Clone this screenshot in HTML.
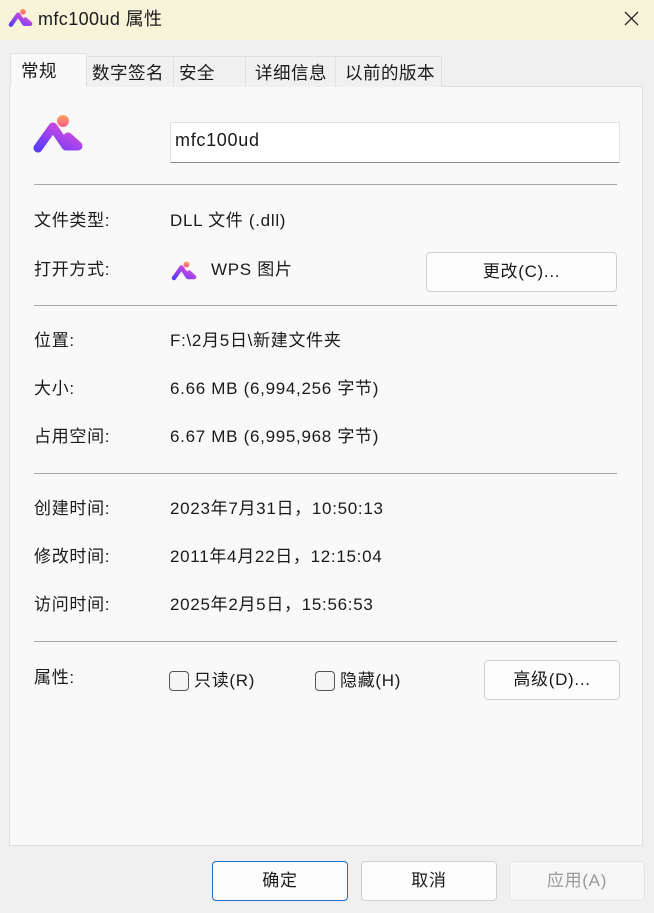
<!DOCTYPE html>
<html><head><meta charset="utf-8"><style>
*{margin:0;padding:0;box-sizing:border-box}
body{width:654px;height:913px;background:#f0f0f0;font-family:"Liberation Sans","Noto Sans CJK SC",sans-serif;font-size:17px;letter-spacing:0.7px;color:#1a1a1a;position:relative;overflow:hidden}
.a{position:absolute;white-space:nowrap;line-height:22px}
.title{left:0;top:0;width:654px;height:40px;background:#f8f4d9}
.panel{left:9px;top:86px;width:634px;height:760px;background:#f9f9f9;border:1px solid #dedede}
.tab{top:56px;height:31px;border:1px solid #e0e0e0;border-bottom:none;background:#f0f0f0;padding:5px 0 0 5px;font-size:17.5px;letter-spacing:0.5px}
.sep{left:34px;width:583px;height:1px;background:#a8a8a8}
.btn{background:#fdfdfd;border:1px solid #d0d0d0;border-radius:4px;text-align:center;padding-top:8px}
.cb{width:20px;height:20px;border:1px solid #555;border-radius:4px;background:#f5f5f5}
</style></head><body>
<div class="a title"></div>
<svg width="0" height="0" style="position:absolute"><defs><linearGradient id="g1" x1="0" y1="1" x2="1" y2="0"><stop offset="0" stop-color="#5b3dff"/><stop offset="1" stop-color="#e64bd8"/></linearGradient><linearGradient id="g2" x1="0" y1="0" x2="0" y2="1"><stop offset="0" stop-color="#ffa45c"/><stop offset="1" stop-color="#ff5a8a"/></linearGradient></defs></svg>
<svg class="a" style="left:8px;top:8px" width="26" height="20" viewBox="6 6 54 40"><circle cx="37" cy="13" r="6" fill="url(#g2)"/><path d="M12 40 L27 19 L40 38 L52 38 M42 29 L52 38" stroke="url(#g1)" stroke-width="9" fill="none" stroke-linecap="round" stroke-linejoin="round"/></svg>
<div class="a" style="left:38px;top:8px;font-size:18px;letter-spacing:0.4px">mfc100ud 属性</div>
<svg class="a" style="left:624px;top:11px" width="15" height="15"><path d="M1 1L14 14M14 1L1 14" stroke="#222" stroke-width="1.3"/></svg>
<div class="a panel"></div>
<div class="a tab" style="left:86px;width:88px">数字签名</div>
<div class="a tab" style="left:173px;width:73px">安全</div>
<div class="a tab" style="left:245px;width:91px;padding-left:9px">详细信息</div>
<div class="a tab" style="left:335px;width:107px;padding-left:9px">以前的版本</div>
<div class="a tab" style="left:10px;top:53px;height:34px;width:77px;background:#f9f9f9;padding-top:6px;padding-left:10px">常规</div>
<svg class="a" style="left:26px;top:108px" width="66" height="50" viewBox="0 0 66 50"><circle cx="37" cy="13" r="6" fill="url(#g2)"/><path d="M12 40 L27 19 L40 38 L52 38 M42 29 L52 38" stroke="url(#g1)" stroke-width="9" fill="none" stroke-linecap="round" stroke-linejoin="round"/></svg>
<div class="a" style="left:170px;top:122px;width:450px;height:41px;background:#fff;border:1px solid #e2e2e2;border-bottom:1px solid #8a8a8a;padding:5px 0 0 4px;font-size:18px;line-height:24px">mfc100ud</div>
<div class="a sep" style="top:184px"></div>
<div class="a" style="left:34px;top:210px">文件类型:</div><div class="a" style="left:170px;top:210px">DLL 文件 (.dll)</div>
<div class="a" style="left:34px;top:259px">打开方式:</div>
<svg class="a" style="left:168px;top:258px" width="33" height="25" viewBox="0 0 66 50"><circle cx="37" cy="13" r="6" fill="url(#g2)"/><path d="M12 40 L27 19 L40 38 L52 38 M42 29 L52 38" stroke="url(#g1)" stroke-width="9" fill="none" stroke-linecap="round" stroke-linejoin="round"/></svg>
<div class="a" style="left:211px;top:259px">WPS 图片</div>
<div class="a btn" style="left:426px;top:252px;width:191px;height:40px">更改(C)...</div>
<div class="a sep" style="top:305px"></div>
<div class="a" style="left:34px;top:330px">位置:</div><div class="a" style="left:170px;top:330px">F:\2月5日\新建文件夹</div>
<div class="a" style="left:34px;top:378px">大小:</div><div class="a" style="left:170px;top:378px">6.66 MB (6,994,256 字节)</div>
<div class="a" style="left:34px;top:426px">占用空间:</div><div class="a" style="left:170px;top:426px">6.67 MB (6,995,968 字节)</div>
<div class="a sep" style="top:473px"></div>
<div class="a" style="left:34px;top:498px">创建时间:</div><div class="a" style="left:170px;top:498px">2023年7月31日，10:50:13</div>
<div class="a" style="left:34px;top:546px">修改时间:</div><div class="a" style="left:170px;top:546px">2011年4月22日，12:15:04</div>
<div class="a" style="left:34px;top:594px">访问时间:</div><div class="a" style="left:170px;top:594px">2025年2月5日，15:56:53</div>
<div class="a sep" style="top:641px"></div>
<div class="a" style="left:34px;top:667px">属性:</div>
<div class="a cb" style="left:169px;top:671px"></div><div class="a" style="left:194px;top:670px">只读(R)</div>
<div class="a cb" style="left:315px;top:671px"></div><div class="a" style="left:340px;top:670px">隐藏(H)</div>
<div class="a btn" style="left:484px;top:660px;width:136px;height:40px">高级(D)...</div>
<div class="a btn" style="left:212px;top:861px;width:136px;height:40px;border-color:#1e6fc8">确定</div>
<div class="a btn" style="left:361px;top:861px;width:136px;height:40px">取消</div>
<div class="a btn" style="left:509px;top:861px;width:136px;height:40px;background:#f6f6f6;border-color:#e6e6e6;color:#9a9a9a">应用(A)</div>
</body></html>
